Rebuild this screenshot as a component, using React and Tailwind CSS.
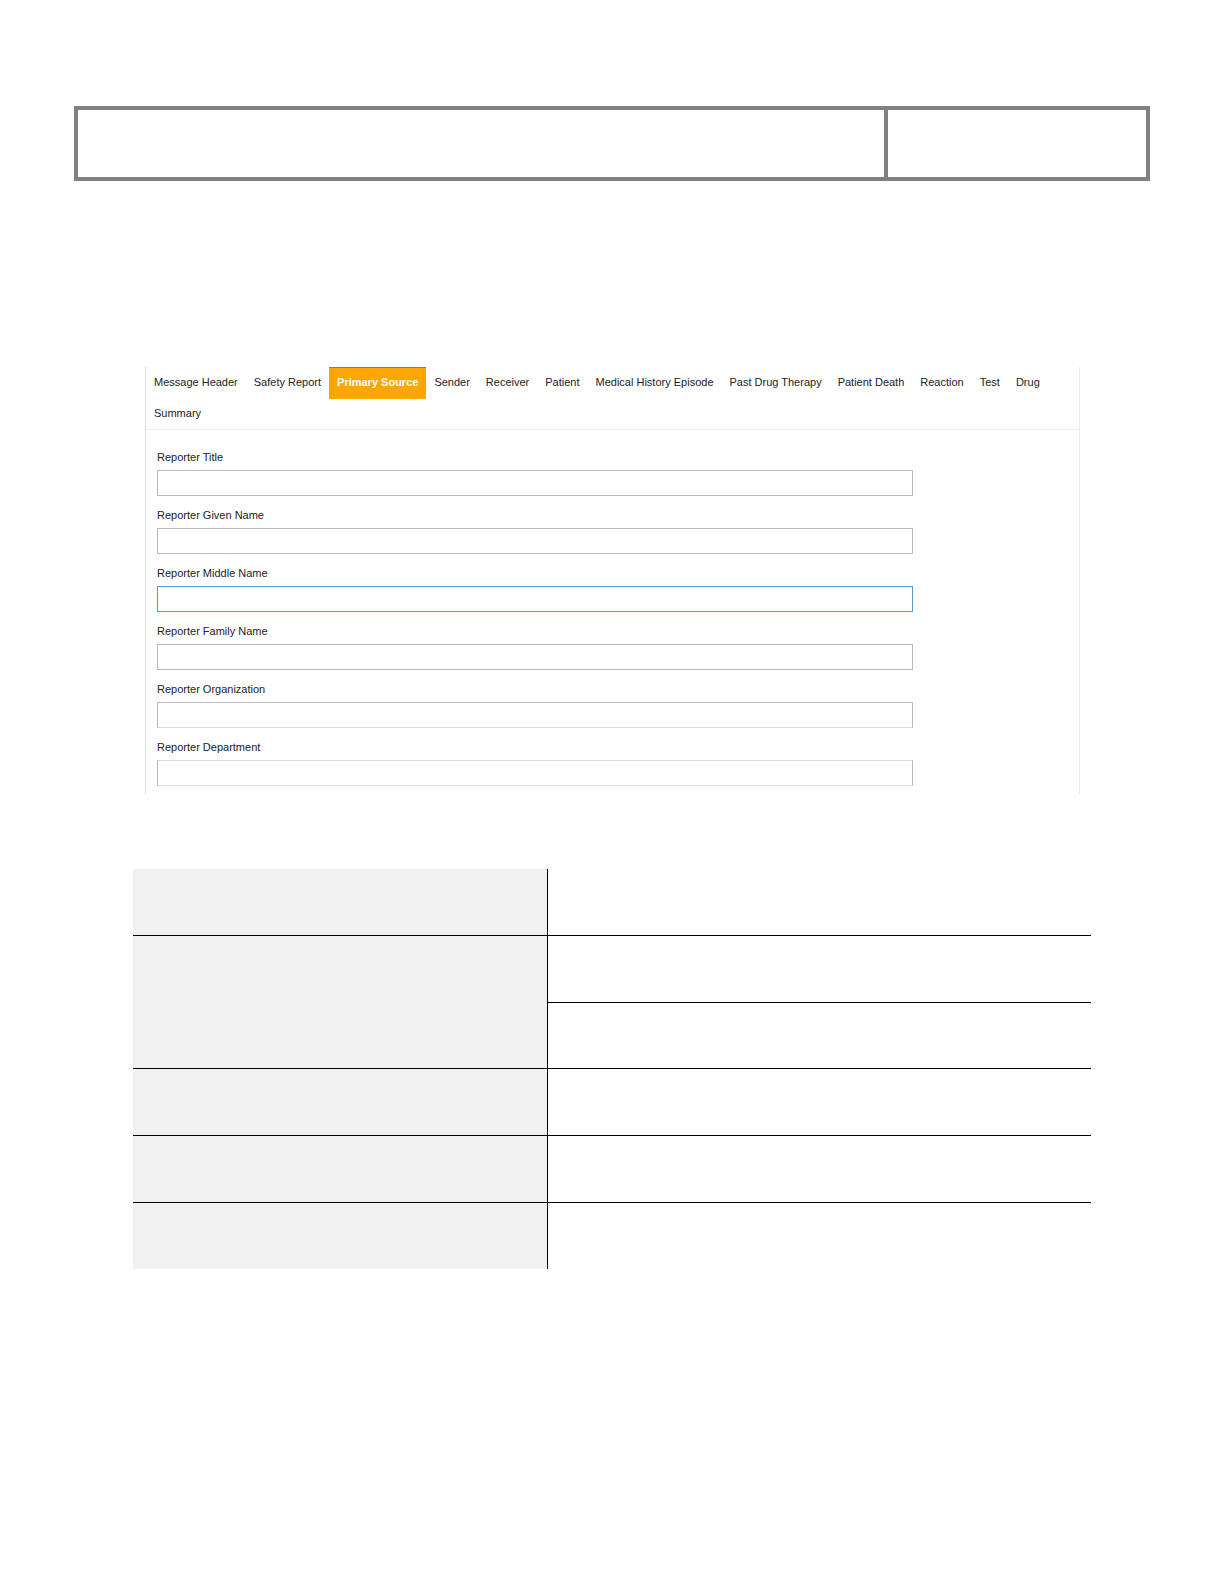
import { useState } from "react";

const tabs = [
  "Message Header",
  "Safety Report",
  "Primary Source",
  "Sender",
  "Receiver",
  "Patient",
  "Medical History Episode",
  "Past Drug Therapy",
  "Patient Death",
  "Reaction",
  "Test",
  "Drug",
  "Summary",
];

const fields = [
  { id: "title", label: "Reporter Title", border: "border-[#b9b9b9]" },
  { id: "given-name", label: "Reporter Given Name", border: "border-[#b9b9b9]" },
  { id: "middle-name", label: "Reporter Middle Name", border: "border-[#5b9bd0]" },
  { id: "family-name", label: "Reporter Family Name", border: "border-[#b9b9b9]" },
  { id: "organization", label: "Reporter Organization", border: "border-[#b9b9b9] border-b-[#dadada]" },
  { id: "department", label: "Reporter Department", border: "border-x-[#b9b9b9] border-y-[#dadada]" },
];

function PageHeader() {
  return (
    <header className="mx-[74px] flex h-[75px] border-4 border-[#808080]">
      <div className="flex-1" />
      <div className="w-[262px] border-l-4 border-[#808080]" />
    </header>
  );
}

function TabBar({ active, onSelect }) {
  return (
    <div role="tablist" className="flex flex-wrap border-b border-[#ececec]">
      {tabs.map((tab) => (
        <button
          key={tab}
          type="button"
          role="tab"
          aria-selected={tab === active}
          onClick={() => onSelect(tab)}
          className={
            tab === active
              ? "-mb-px h-8 border-t border-t-[#5a8aa8] bg-[#ffa500] px-2 pb-0.5 font-bold text-white"
              : "h-[31px] px-2"
          }
        >
          {tab}
        </button>
      ))}
    </div>
  );
}

function Field({ id, label, border }) {
  return (
    <div>
      <label htmlFor={id} className="mb-[5px] block h-4 leading-4">
        {label}
      </label>
      <input
        id={id}
        type="text"
        className={`block h-[26px] w-[83%] border bg-white px-2 outline-none ${border}`}
      />
    </div>
  );
}

function ReportForm() {
  const [active, setActive] = useState("Primary Source");
  return (
    <section className="mr-36 ml-[145px] border-r border-l border-r-[#ececec] border-l-[#dcdcdc] text-[11px] text-[#222222]">
      <TabBar active={active} onSelect={setActive} />
      <form className="flex flex-col gap-[11px] px-[11px] pt-[19px] pb-2">
        {fields.map((field) => (
          <Field key={field.id} {...field} />
        ))}
      </form>
    </section>
  );
}

function DetailTable() {
  return (
    <div className="mx-[133px]">
      <table className="w-full table-fixed border-separate border-spacing-0">
        <colgroup>
          <col className="w-[414px]" />
          <col />
        </colgroup>
        <tbody>
          <tr className="h-[67px]">
            <td className="border-b border-black bg-[#f1f1f1]" />
            <td className="border-b border-l border-black" />
          </tr>
          <tr className="h-[67px]">
            <td rowSpan={2} className="border-b border-black bg-[#f1f1f1]" />
            <td className="border-b border-l border-black" />
          </tr>
          <tr className="h-[66px]">
            <td className="border-b border-l border-black" />
          </tr>
          <tr className="h-[67px]">
            <td className="border-b border-black bg-[#f1f1f1]" />
            <td className="border-b border-l border-black" />
          </tr>
          <tr className="h-[67px]">
            <td className="border-b border-black bg-[#f1f1f1]" />
            <td className="border-b border-l border-black" />
          </tr>
          <tr className="h-[66px]">
            <td className="bg-[#f1f1f1]" />
            <td className="border-l border-black" />
          </tr>
        </tbody>
      </table>
    </div>
  );
}

export default function App() {
  return (
    <div className="min-h-screen bg-white pt-[106px] font-['Liberation_Sans',Arial,sans-serif]">
      <PageHeader />
      <main className="flex flex-col gap-[75px] pt-[186px]">
        <ReportForm />
        <DetailTable />
      </main>
    </div>
  );
}
